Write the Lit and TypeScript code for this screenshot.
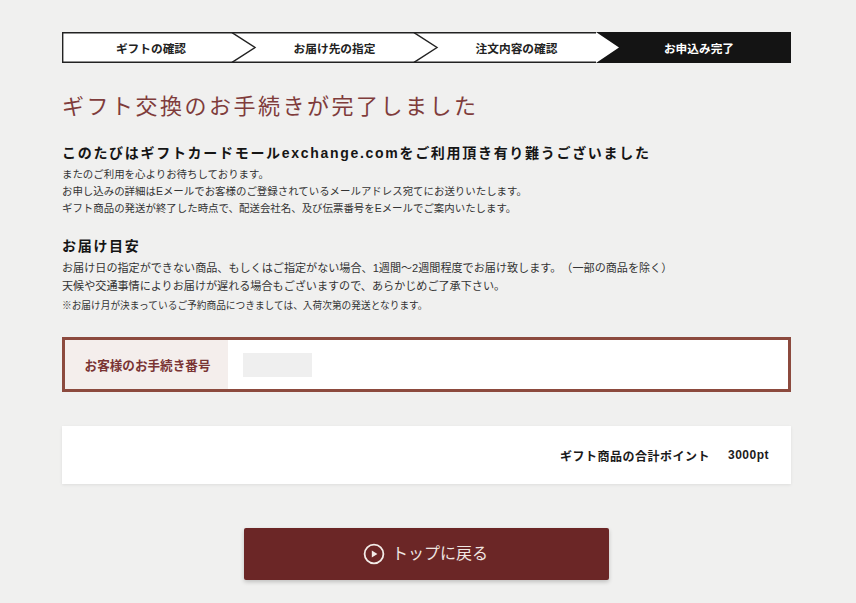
import { LitElement, html, css, svg } from "lit";
import { customElement } from "lit/decorators.js";

@customElement("app-root")
export class AppRoot extends LitElement {
  static styles = css`
    :host {
      display: block;
      width: 856px;
      height: 603px;
      overflow: hidden;
      background: #f0f0ef;
      font-family: "Liberation Sans", "Noto Sans CJK JP", sans-serif;
      color: #222;
      text-spacing-trim: space-all;
    }
    .page {
      box-sizing: border-box;
      width: 856px;
      padding: 32px 65px 0 62px;
      display: flex;
      flex-direction: column;
    }
    .steps {
      display: grid;
      grid-template-columns: 170px 182px 182px 195px;
      height: 31px;
      background: #fff;
      position: relative;
    }
    .step {
      display: flex;
      align-items: center;
      justify-content: center;
      font-size: 11.7px;
      font-weight: 700;
      color: #222;
      box-sizing: border-box;
      padding-left: 23px;
    }
    .step.first {
      padding-left: 8px;
    }
    .step.last {
      padding-left: 11px;
      color: #fff;
    }
    .step span {
      position: relative;
      z-index: 1;
    }
    .chev {
      position: absolute;
      left: 0;
      top: 0;
      width: 729px;
      height: 31px;
      pointer-events: none;
    }
    h1 {
      margin: 29px 0 0;
      font-family: "Liberation Serif", "Noto Sans CJK JP", serif;
      font-size: 22px;
      line-height: 30px;
      font-weight: 400;
      letter-spacing: 2.5px;
      color: #7f3c3b;
    }
    h2 {
      margin: 0;
      font-size: 14px;
      line-height: 20px;
      font-weight: 700;
      letter-spacing: 1.7px;
      color: #151515;
    }
    .lead {
      margin-top: 21px;
    }
    .second {
      margin-top: 19px;
    }
    p {
      margin: 0;
      font-size: 10.45px;
      line-height: 17px;
      color: #333;
    }
    .body {
      margin-top: 3px;
    }
    .wide p {
      font-size: 11.1px;
      line-height: 18px;
    }
    .wide p.note {
      font-size: 9.7px;
      line-height: 17px;
      margin-top: 2px;
    }
    .number {
      margin-top: 23px;
      height: 55px;
      box-sizing: border-box;
      border: 3px solid #8c4a3e;
      background: #fff;
      display: flex;
      align-items: stretch;
    }
    .number .label {
      width: 163px;
      background: #f4eeec;
      color: #7a3434;
      font-size: 12.6px;
      font-weight: 700;
      display: flex;
      align-items: center;
      justify-content: center;
      padding-left: 2px;
      box-sizing: border-box;
    }
    .number .value {
      display: flex;
      align-items: center;
      padding-left: 15px;
    }
    .mask {
      width: 69px;
      height: 24px;
      background: #efefef;
    }
    .total {
      margin-top: 34px;
      height: 58px;
      background: #fff;
      box-shadow: 0 1px 3px rgba(0, 0, 0, 0.08);
      display: flex;
      align-items: center;
      justify-content: flex-end;
      padding-right: 22px;
      font-size: 12px;
      font-weight: 700;
      color: #1b1b1b;
      gap: 18px;
      letter-spacing: 0.5px;
    }
    .btn-wrap {
      margin-top: 44px;
      display: flex;
      justify-content: center;
      padding-right: 1px;
    }
    .btn {
      width: 365px;
      height: 52px;
      border-radius: 2px;
      background: #6b2626;
      color: #efe6e2;
      box-shadow: 0 2px 4px rgba(0, 0, 0, 0.2);
      display: flex;
      align-items: center;
      justify-content: center;
      gap: 7px;
      font-size: 16px;
      padding-right: 1px;
      box-sizing: border-box;
    }
    .btn span {
      position: relative;
      top: -2px;
    }
    .btn svg {
      width: 22px;
      height: 22px;
      display: block;
    }
  `;

  render() {
    const chev = (x: number) =>
      svg`<polyline points="${x},0.6 ${x + 23},15.5 ${x},30.4" fill="none" stroke="#222" stroke-width="1.4"/>`;
    return html`
      <div class="page">
        <div class="steps">
          <div class="step first"><span>ギフトの確認</span></div>
          <div class="step"><span>お届け先の指定</span></div>
          <div class="step"><span>注文内容の確認</span></div>
          <div class="step last"><span>お申込み完了</span></div>
          <svg class="chev" viewBox="0 0 729 31">
            <polygon points="534,0 557,15.5 534,31 729,31 729,0" fill="#141414" />
            <polyline points="534,0.7 0.7,0.7 0.7,30.3 534,30.3" fill="none" stroke="#222" stroke-width="1.4" />
            ${chev(170)}
            ${chev(352)}
          </svg>
        </div>
        <h1>ギフト交換のお手続きが完了しました</h1>
        <h2 class="lead">このたびはギフトカードモールexchange.comをご利用頂き有り難うございました</h2>
        <div class="body">
          <p>またのご利用を心よりお待ちしております。</p>
          <p>お申し込みの詳細はEメールでお客様のご登録されているメールアドレス宛てにお送りいたします。</p>
          <p>ギフト商品の発送が終了した時点で、配送会社名、及び伝票番号をEメールでご案内いたします。</p>
        </div>
        <h2 class="second">お届け目安</h2>
        <div class="body wide">
          <p>お届け日の指定ができない商品、もしくはご指定がない場合、1週間～2週間程度でお届け致します。（一部の商品を除く）</p>
          <p>天候や交通事情によりお届けが遅れる場合もございますので、あらかじめご了承下さい。</p>
          <p class="note">※お届け月が決まっているご予約商品につきましては、入荷次第の発送となります。</p>
        </div>
        <div class="number">
          <div class="label">お客様のお手続き番号</div>
          <div class="value"><div class="mask"></div></div>
        </div>
        <div class="total"><span>ギフト商品の合計ポイント</span><span>3000pt</span></div>
        <div class="btn-wrap">
          <div class="btn">
            <svg viewBox="0 0 22 22">
              <circle cx="11" cy="11" r="9.4" fill="none" stroke="#f3ece8" stroke-width="1.8" />
              <polygon points="8.8,7.6 14.4,11 8.8,14.4" fill="#f3ece8" />
            </svg>
            <span>トップに戻る</span>
          </div>
        </div>
      </div>
    `;
  }
}
